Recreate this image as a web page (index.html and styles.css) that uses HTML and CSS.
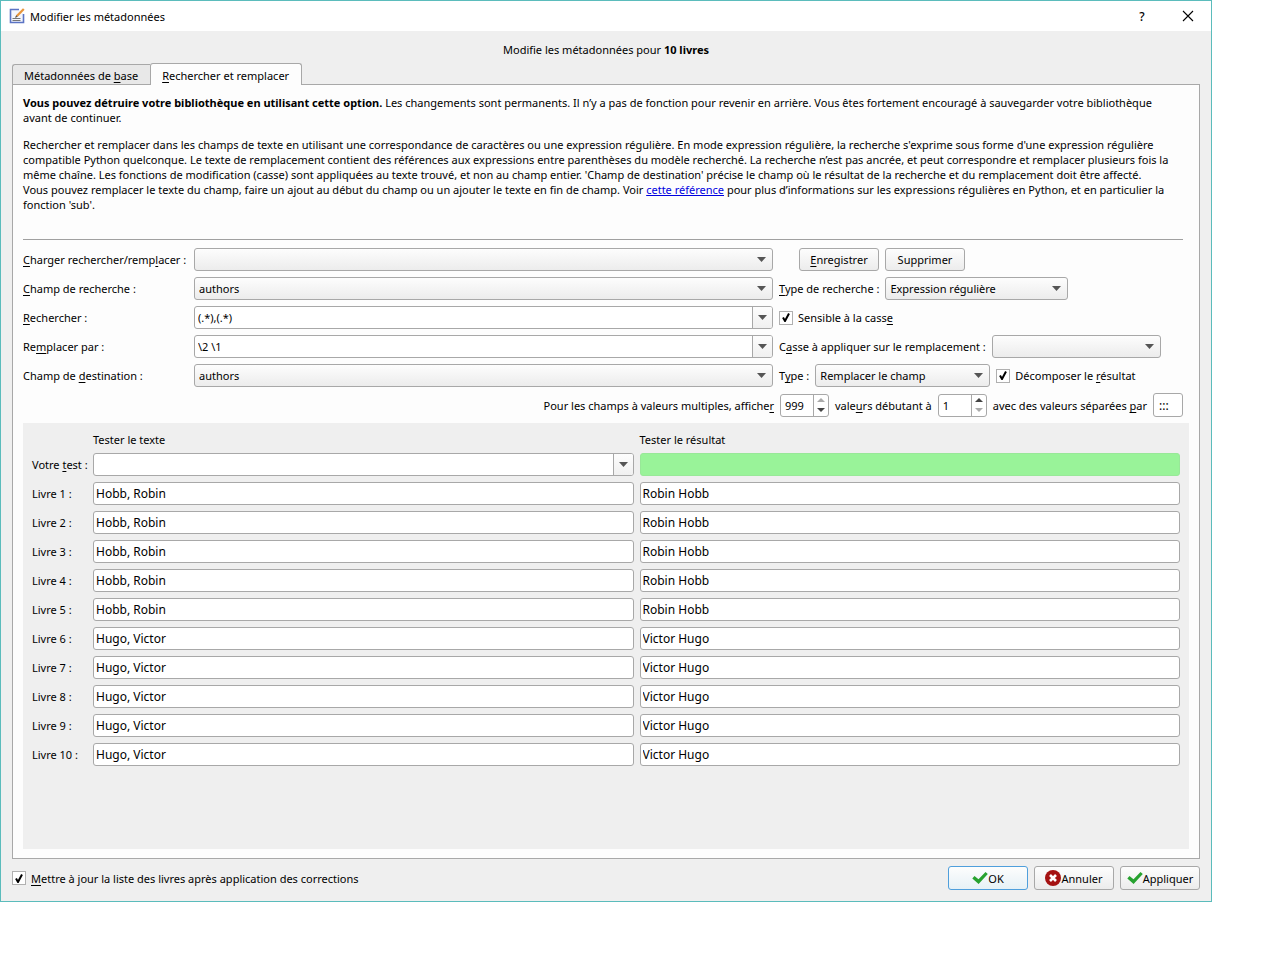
FILE: index.html
```
<!DOCTYPE html>
<html lang="fr">
<head>
  <meta charset="UTF-8" />
  <title>Modifier les métadonnées</title>
  <link rel="stylesheet" href="styles.css">
</head>
<body>
  <main class="dialog">
    <header class="titlebar">
      <svg class="app-icon" viewBox="0 0 16 16" aria-hidden="true">
        <path d="M10 1.500H1.500v13h13V6" fill="#f4f6fd" stroke="#5b74c4" stroke-width="1.600"/>
        <path d="M3.500 10.500h8M3.500 12.500h8" stroke="#777" stroke-width="1"/>
        <path d="M6.500 9l.8-2L14 .2l1.600 1.500L9 8.500z" fill="#e8963c"/>
        <path d="M6 10l1.200-2.700 1.500 1.500z" fill="#555"/>
      </svg>
      <span class="title">Modifier les métadonnées</span>
      <button class="title-btn" type="button" aria-label="Aide">?</button>
      <button class="title-btn" type="button" aria-label="Fermer">
        <svg viewBox="0 0 12 12" width="12" height="12"><path d="M1 1l10 10M11 1L1 11" stroke="#000" stroke-width="1.100"/></svg>
      </button>
    </header>

    <div class="content">
      <p class="heading">Modifie les métadonnées pour <b>10 livres</b></p>

      <div class="tabs" role="tablist">
        <button class="tab" type="button" role="tab" aria-selected="false">Métadonnées de <u>b</u>ase</button>
        <button class="tab active" type="button" role="tab" aria-selected="true"><u>R</u>echercher et remplacer</button>
      </div>

      <section class="panel" role="tabpanel">
        <div class="help">
          <p><b>Vous pouvez détruire votre bibliothèque en utilisant cette option.</b> Les changements sont permanents. Il n’y a pas de fonction pour revenir en arrière. Vous êtes fortement encouragé à sauvegarder votre bibliothèque<br>avant de continuer.</p>
          <p>Rechercher et remplacer dans les champs de texte en utilisant une correspondance de caractères ou une expression régulière. En mode expression régulière, la recherche s'exprime sous forme d'une expression régulière<br>compatible Python quelconque. Le texte de remplacement contient des références aux expressions entre parenthèses du modèle recherché. La recherche n’est pas ancrée, et peut correspondre et remplacer plusieurs fois la<br>même chaîne. Les fonctions de modification (casse) sont appliquées au texte trouvé, et non au champ entier. 'Champ de destination' précise le champ où le résultat de la recherche et du remplacement doit être affecté.<br>Vous pouvez remplacer le texte du champ, faire un ajout au début du champ ou un ajouter le texte en fin de champ. Voir <a href="#">cette référence</a> pour plus d’informations sur les expressions régulières en Python, et en particulier la<br>fonction 'sub'.</p>
        </div>

        <form class="form">
          <label for="load"><u>C</u>harger rechercher/remp<u>l</u>acer :</label>
          <select id="load"><option></option></select>
          <div class="side indent">
            <button class="btn" type="button"><u>E</u>nregistrer</button>
            <button class="btn" type="button">Supprimer</button>
          </div>

          <label for="field"><u>C</u>hamp de recherche :</label>
          <select id="field"><option>authors</option></select>
          <div class="side">
            <label for="mode"><u>T</u>ype de recherche :</label>
            <select id="mode" class="mode"><option>Expression régulière</option></select>
          </div>

          <label for="search"><u>R</u>echercher :</label>
          <div class="combo">
            <input id="search" type="text" value="(.*),(.*)">
            <button type="button" aria-label="Historique des recherches"></button>
          </div>
          <div class="side">
            <label class="check"><input type="checkbox" checked><span>Sensible à la cass<u>e</u></span></label>
          </div>

          <label for="replace">Re<u>m</u>placer par :</label>
          <div class="combo">
            <input id="replace" type="text" value="\2 \1">
            <button type="button" aria-label="Historique des remplacements"></button>
          </div>
          <div class="side">
            <label for="case">C<u>a</u>sse à appliquer sur le remplacement :</label>
            <select id="case" class="case"><option></option></select>
          </div>

          <label for="dest">Champ de <u>d</u>estination :</label>
          <select id="dest"><option>authors</option></select>
          <div class="side">
            <label for="type">T<u>y</u>pe :</label>
            <select id="type" class="type"><option>Remplacer le champ</option></select>
            <label class="check"><input type="checkbox" checked><span>Décomposer le <u>r</u>ésultat</span></label>
          </div>

          <div class="multiple">
            <label for="count">Pour les champs à valeurs multiples, affiche<u>r</u></label>
            <span class="spin at-max"><input id="count" type="number" value="999" max="999"></span>
            <label for="start">vale<u>u</u>rs débutant à</label>
            <span class="spin at-min"><input id="start" type="number" value="1" min="1"></span>
            <label for="sep">avec des valeurs séparées <u>p</u>ar</label>
            <input id="sep" class="text sep" type="text" value=":::">
          </div>
        </form>

        <div class="tests">
          <span></span><span class="col-title">Tester le texte</span><span class="col-title">Tester le résultat</span>

          <label for="t0">Votre <u>t</u>est :</label>
          <div class="combo">
            <input id="t0" type="text">
            <button type="button" aria-label="Historique des tests"></button>
          </div>
          <input class="text ok" type="text" aria-label="Résultat du test" readonly>

          <label for="t1">Livre 1 :</label>
          <input id="t1" class="text" type="text" value="Hobb, Robin">
          <input class="text" type="text" value="Robin Hobb" aria-label="Résultat 1">

          <label for="t2">Livre 2 :</label>
          <input id="t2" class="text" type="text" value="Hobb, Robin">
          <input class="text" type="text" value="Robin Hobb" aria-label="Résultat 2">

          <label for="t3">Livre 3 :</label>
          <input id="t3" class="text" type="text" value="Hobb, Robin">
          <input class="text" type="text" value="Robin Hobb" aria-label="Résultat 3">

          <label for="t4">Livre 4 :</label>
          <input id="t4" class="text" type="text" value="Hobb, Robin">
          <input class="text" type="text" value="Robin Hobb" aria-label="Résultat 4">

          <label for="t5">Livre 5 :</label>
          <input id="t5" class="text" type="text" value="Hobb, Robin">
          <input class="text" type="text" value="Robin Hobb" aria-label="Résultat 5">

          <label for="t6">Livre 6 :</label>
          <input id="t6" class="text" type="text" value="Hugo, Victor">
          <input class="text" type="text" value="Victor Hugo" aria-label="Résultat 6">

          <label for="t7">Livre 7 :</label>
          <input id="t7" class="text" type="text" value="Hugo, Victor">
          <input class="text" type="text" value="Victor Hugo" aria-label="Résultat 7">

          <label for="t8">Livre 8 :</label>
          <input id="t8" class="text" type="text" value="Hugo, Victor">
          <input class="text" type="text" value="Victor Hugo" aria-label="Résultat 8">

          <label for="t9">Livre 9 :</label>
          <input id="t9" class="text" type="text" value="Hugo, Victor">
          <input class="text" type="text" value="Victor Hugo" aria-label="Résultat 9">

          <label for="t10">Livre 10 :</label>
          <input id="t10" class="text" type="text" value="Hugo, Victor">
          <input class="text" type="text" value="Victor Hugo" aria-label="Résultat 10">
        </div>
      </section>

      <footer class="footer">
        <label class="check"><input type="checkbox" checked><span><u>M</u>ettre à jour la liste des livres après application des corrections</span></label>
        <div class="actions">
          <button class="btn default" type="button">
            <svg viewBox="0 0 16 16" width="16" height="16"><path d="M.3 8.500L2.500 6l4 3.200L13.500 2 15.800 4 6.600 14z" fill="#27a22f"/></svg>OK
          </button>
          <button class="btn" type="button">
            <svg viewBox="0 0 16 16" width="16" height="16"><circle cx="8" cy="8" r="8" fill="#a51212"/><path d="M5 5l6 6M11 5l-6 6" stroke="#fff" stroke-width="2.600"/></svg>Annuler
          </button>
          <button class="btn" type="button">
            <svg viewBox="0 0 16 16" width="16" height="16"><path d="M.3 8.500L2.500 6l4 3.200L13.500 2 15.800 4 6.600 14z" fill="#27a22f"/></svg>Appliquer
          </button>
        </div>
      </footer>
    </div>
  </main>
</body>
</html>
```
FILE: styles.css
```
* {
  box-sizing: border-box;
}
body {
  margin: 0;
  min-height: 100vh;
  padding: 0 68px 58px 0;
  display: flex;
  background: #fff;
  color: #000;
  font-family: "Noto Sans", "Open Sans", sans-serif;
  font-size: 11px;
  line-height: 15px;
}
button, input, select {
  font: inherit;
  color: inherit;
  margin: 0;
}
p {
  margin: 0;
}
u {
  text-underline-offset: 2px;
  text-decoration-skip-ink: none;
}
label {
  white-space: nowrap;
}
.dialog {
  flex: 1;
  min-width: 0;
  display: flex;
  flex-direction: column;
  background: #efefef;
  border: 1px solid #5bbcbc;
}

/* Title bar */
.titlebar {
  display: flex;
  align-items: center;
  height: 30px;
  padding-left: 8px;
  background: #fff;
}
.app-icon {
  width: 16px;
  height: 16px;
}
.title {
  flex: 1;
  padding-left: 5px;
}
.title-btn {
  width: 46px;
  height: 28px;
  padding: 0;
  border: none;
  background: none;
  font-size: 12px;
  font-weight: 500;
}
.title-btn svg {
  display: block;
  margin: auto;
}

/* Tabs */
.content {
  flex: 1;
  display: flex;
  flex-direction: column;
  padding: 11px;
}
.heading {
  text-align: center;
}
.tabs {
  display: flex;
  align-items: flex-end;
  margin-top: 6px;
}
.tab {
  height: 20px;
  padding: 1px 12px 0 11px;
  border: 1px solid #a8a8a8;
  border-width: 1px 0 0 1px;
  border-radius: 3px 0 0 0;
  background: #e8e8e8;
}
.tab.active {
  height: 22px;
  margin-bottom: -1px;
  border-width: 1px 1px 0;
  border-radius: 3px 3px 0 0;
  background: #fdfdfd;
  z-index: 1;
}
.panel {
  flex: 1;
  display: flex;
  flex-direction: column;
  padding: 10px 10px 9px;
  border: 1px solid #a8a8a8;
  background: #fdfdfd;
}
.help {
  margin-right: 6px;
  padding-bottom: 27px;
  border-bottom: 1px solid #a0a0a0;
  white-space: nowrap;
}
.help p + p {
  margin-top: 12px;
}
a {
  color: #0000e0;
}

/* Form */
.form {
  display: grid;
  grid-template-columns: 165px 1fr 404px;
  gap: 6px;
  align-items: center;
  margin: 8px 6px 6px 0;
}
select, .text, .combo, .btn, .spin {
  height: 23px;
  border: 1px solid #a8a8a8;
  border-radius: 3px;
}
select {
  width: 100%;
  padding: 0 20px 0 4px;
  appearance: none;
  background: url("data:image/svg+xml,%3Csvg xmlns='http://www.w3.org/2000/svg' width='9' height='5'%3E%3Cpath d='M0 0h9L4.500 5z' fill='%23555'/%3E%3C/svg%3E") no-repeat right 6px center, linear-gradient(#fdfdfd, #ececec);
}
.side {
  display: flex;
  align-items: center;
  gap: 6px;
}
.indent {
  padding-left: 20px;
}
.mode {
  width: 183px;
}
.case {
  width: 169px;
}
.type {
  width: 175px;
}
.btn {
  display: flex;
  align-items: center;
  justify-content: center;
  width: 80px;
  padding: 0;
  background: linear-gradient(#fdfdfd, #ececec);
}
.text, .combo {
  width: 100%;
  min-width: 0;
  background: #fff;
}
.text {
  padding: 0 2px;
  font-size: 12px;
}
.combo {
  display: flex;
  overflow: hidden;
}
.combo input {
  flex: 1;
  min-width: 0;
  padding: 0 3px;
  border: none;
  background: none;
}
.combo button {
  width: 20px;
  border: none;
  border-left: 1px solid #a8a8a8;
  background: url("data:image/svg+xml,%3Csvg xmlns='http://www.w3.org/2000/svg' width='9' height='5'%3E%3Cpath d='M0 0h9L4.500 5z' fill='%23555'/%3E%3C/svg%3E") no-repeat center, linear-gradient(#fdfdfd, #f0f0f0);
}
.check {
  display: flex;
  align-items: center;
  gap: 5px;
}
.check input {
  appearance: none;
  width: 14px;
  height: 14px;
  border: 1px solid #b0b0b0;
  background: #fff;
}
.check input:checked {
  background: #fff url("data:image/svg+xml,%3Csvg xmlns='http://www.w3.org/2000/svg' width='8' height='9'%3E%3Cpath d='M1 4.500L3 8 7 .5' fill='none' stroke='%23000' stroke-width='2'/%3E%3C/svg%3E") no-repeat center;
}
.multiple {
  grid-column: 1 / -1;
  display: flex;
  align-items: center;
  justify-content: flex-end;
  gap: 6px;
}
.spin {
  display: flex;
  width: 49px;
  background: #fff;
}
.spin::after {
  content: "";
  width: 14px;
  border-left: 1px solid #a8a8a8;
  background: no-repeat center;
}
.at-max::after {
  background-image: url("data:image/svg+xml,%3Csvg xmlns='http://www.w3.org/2000/svg' width='8' height='14'%3E%3Cpath d='M0 4h8L4 0z' fill='%23aaa'/%3E%3Cpath d='M0 10h8L4 14z' fill='%23444'/%3E%3C/svg%3E");
}
.at-min::after {
  background-image: url("data:image/svg+xml,%3Csvg xmlns='http://www.w3.org/2000/svg' width='8' height='14'%3E%3Cpath d='M0 4h8L4 0z' fill='%23444'/%3E%3Cpath d='M0 10h8L4 14z' fill='%23aaa'/%3E%3C/svg%3E");
}
.spin input {
  flex: 1;
  min-width: 0;
  padding: 0 4px;
  border: none;
  background: none;
  appearance: textfield;
}
.spin input::-webkit-inner-spin-button {
  display: none;
}
.sep {
  width: 30px;
  height: 24px;
  padding: 0 5px;
}

/* Test area */
.tests {
  flex: 1;
  display: grid;
  grid-template-columns: 55px 1fr 1fr;
  gap: 6px;
  align-content: start;
  align-items: center;
  padding: 9px;
  background: #efefef;
}
.ok {
  border-color: #98e898;
  background: #99f399;
}

/* Footer */
.footer {
  display: flex;
  align-items: center;
  justify-content: space-between;
  margin-top: 7px;
}
.actions {
  display: flex;
  gap: 6px;
}
.actions .btn {
  height: 24px;
}
.actions .default {
  border-color: #4f9fdc;
  background: linear-gradient(#fdfdfd, #e6f1f6);
}
```
